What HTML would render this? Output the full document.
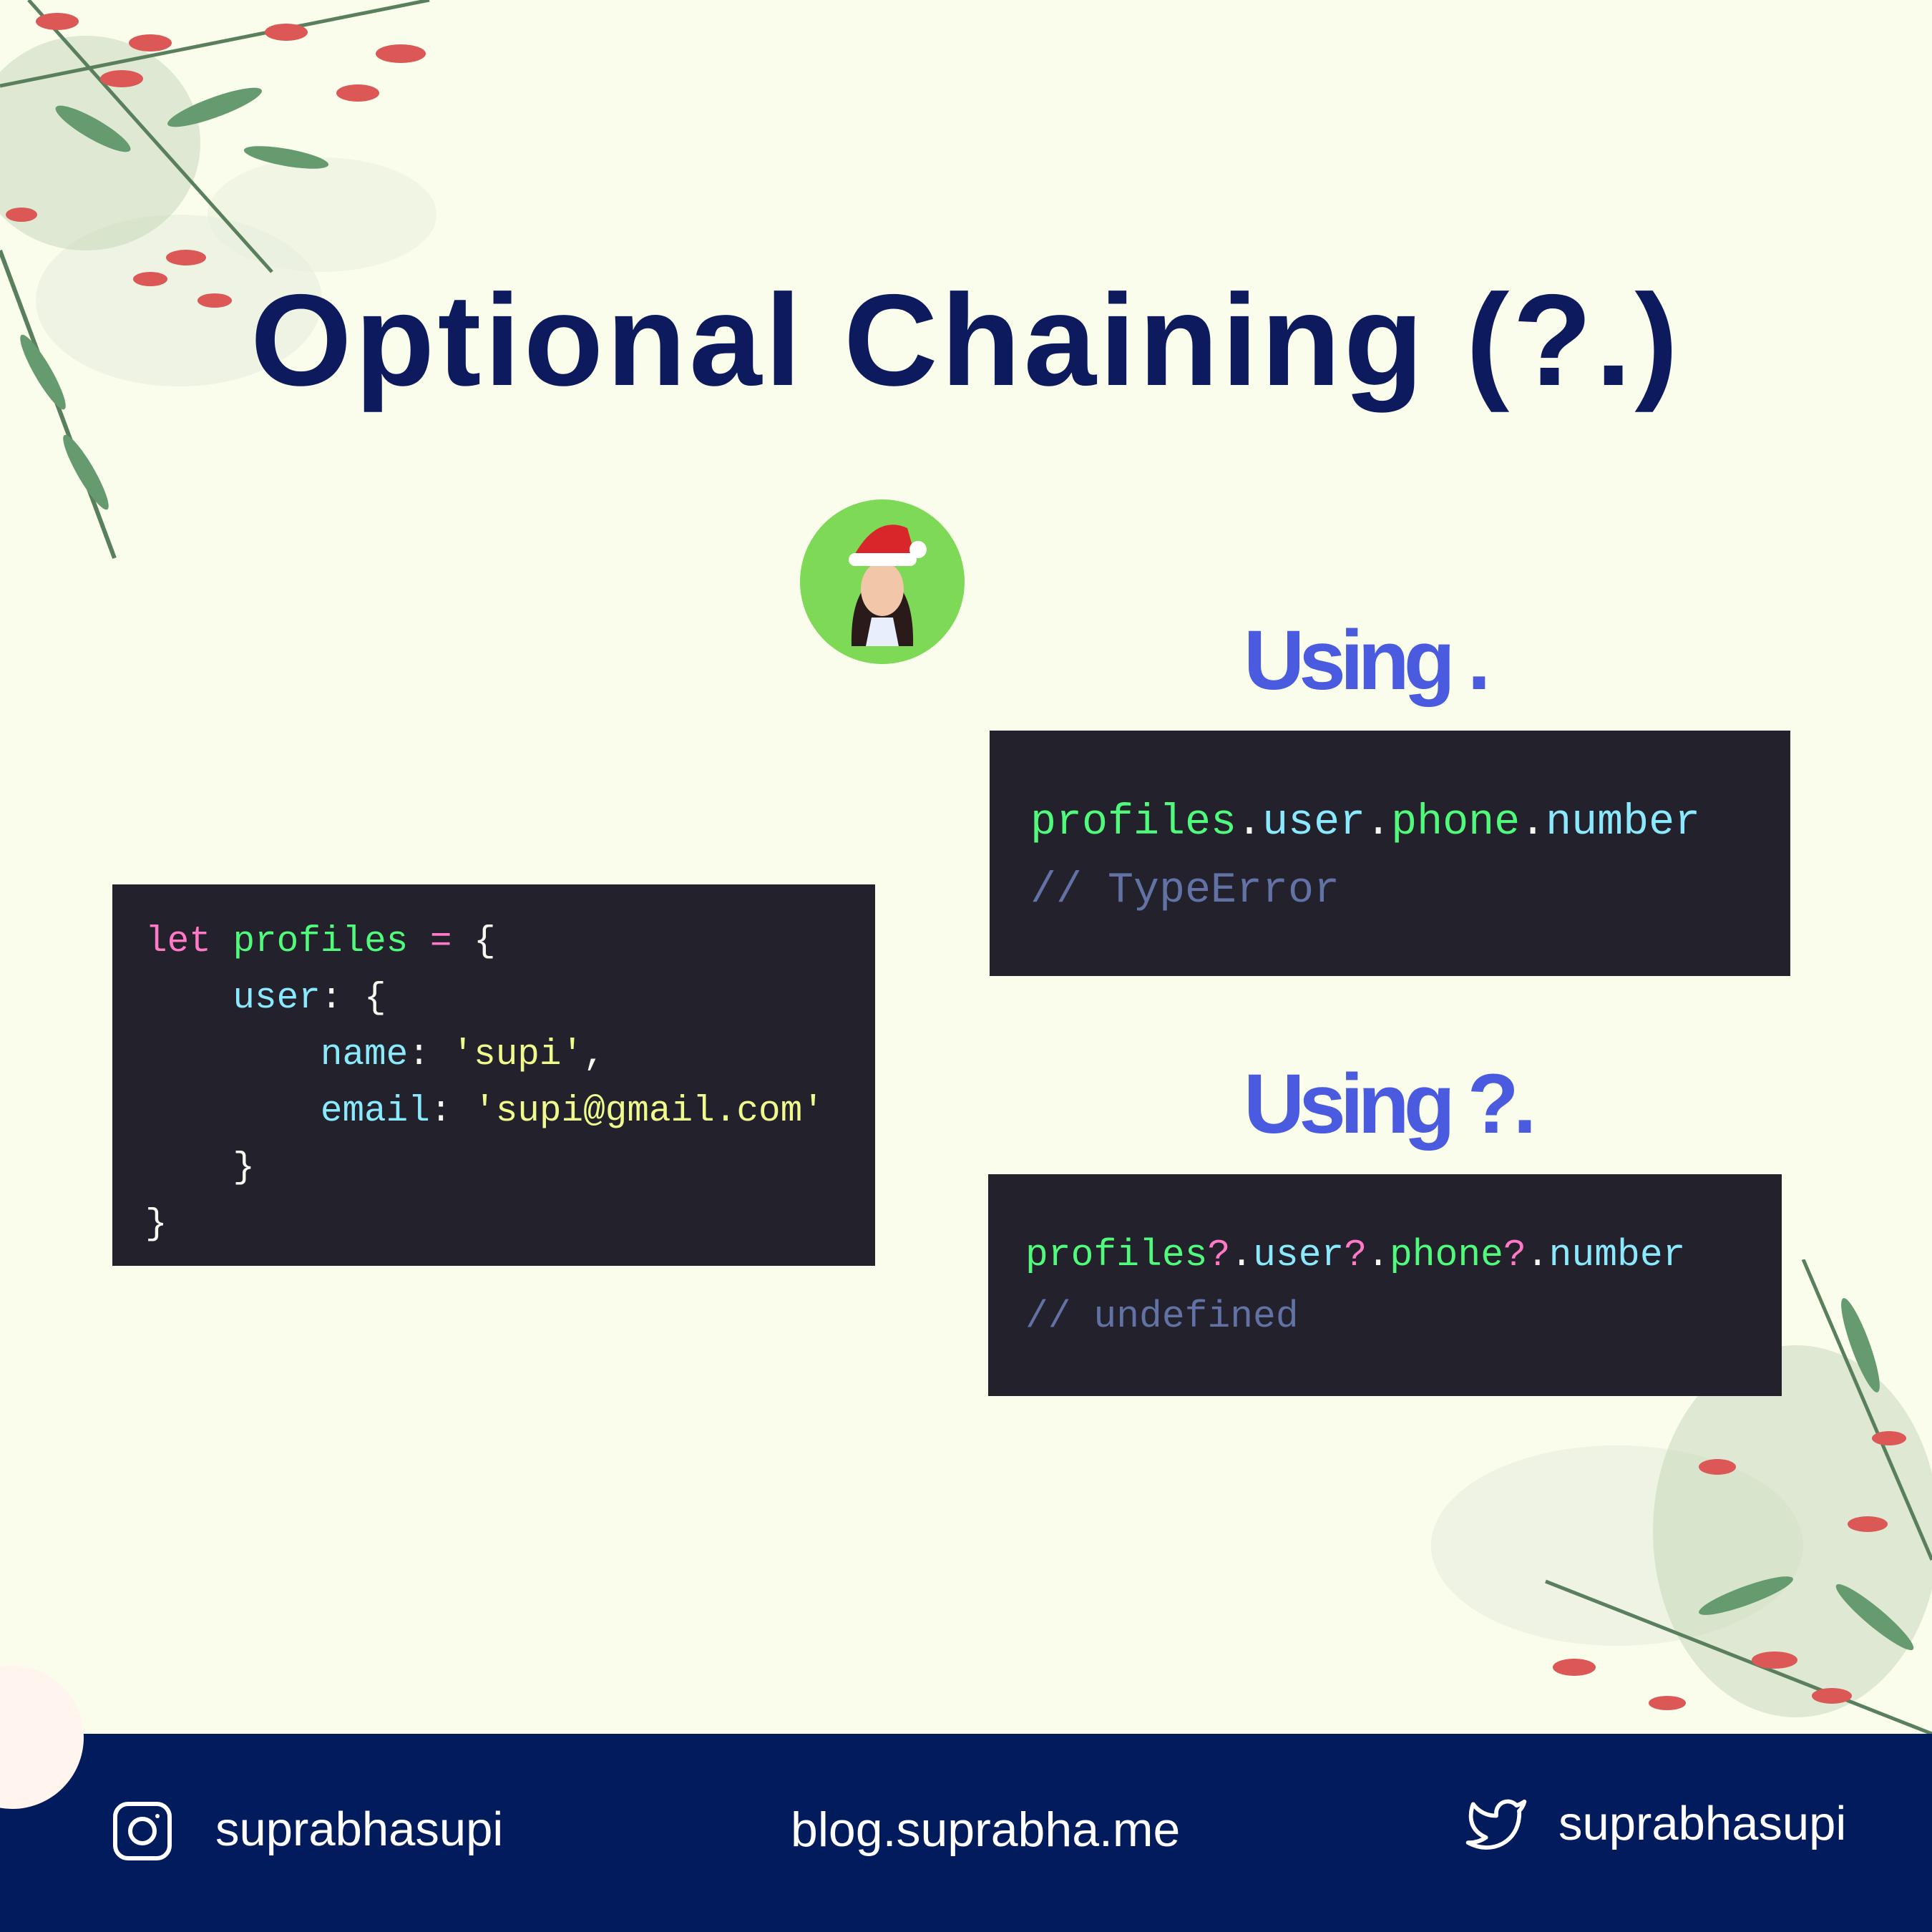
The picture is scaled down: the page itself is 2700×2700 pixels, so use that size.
<!DOCTYPE html>
<html><head><meta charset="utf-8"><style>
html,body{margin:0;padding:0}
body{width:2700px;height:2700px;position:relative;overflow:hidden;background:#fafdec;font-family:"Liberation Sans",sans-serif}
.abs{position:absolute}
.title{left:350px;top:370px;font-size:182px;font-weight:bold;color:#0d1b5e;letter-spacing:4.5px;white-space:nowrap}
.using{font-size:118px;font-weight:bold;color:#4a5be0;white-space:nowrap;letter-spacing:-8px}
.code{background:#22212c;font-family:"Liberation Mono",monospace;white-space:pre;color:#f8f8f2}
.pk{color:#ff79c6}.gr{color:#50fa7b}.cy{color:#8be9fd}.ye{color:#f1fa8c}.cm{color:#6272a4}
.footer{left:0;top:2423px;width:2700px;height:277px;background:#021b5c}
.ft{color:#fff;font-size:67px;white-space:nowrap}
</style></head><body>

<svg class="abs" style="left:0;top:0" width="820" height="820" viewBox="0 0 820 820">
<g opacity="0.85">
<ellipse cx="250" cy="420" rx="200" ry="120" fill="#e3eadb" opacity="0.6"/>
<ellipse cx="450" cy="300" rx="160" ry="80" fill="#e6ecdc" opacity="0.6"/>
<ellipse cx="120" cy="200" rx="160" ry="150" fill="#b9ceb0" opacity="0.5"/>
<path d="M0 350 L160 780" stroke="#3d6a45" stroke-width="6"/>
<path d="M0 120 L600 0" stroke="#3d6a45" stroke-width="5"/>
<path d="M40 0 L380 380" stroke="#3d6a45" stroke-width="5"/>
<g fill="#d63c3c">
<ellipse cx="80" cy="30" rx="30" ry="12"/><ellipse cx="210" cy="60" rx="30" ry="12"/><ellipse cx="400" cy="45" rx="30" ry="12"/>
<ellipse cx="560" cy="75" rx="35" ry="13"/><ellipse cx="500" cy="130" rx="30" ry="12"/><ellipse cx="170" cy="110" rx="30" ry="12"/>
<ellipse cx="260" cy="360" rx="28" ry="11"/><ellipse cx="300" cy="420" rx="24" ry="10"/><ellipse cx="210" cy="390" rx="24" ry="10"/>
<ellipse cx="30" cy="300" rx="22" ry="10"/>
</g>
<g fill="#4c8a5a">
<ellipse cx="130" cy="180" rx="60" ry="14" transform="rotate(30 130 180)"/>
<ellipse cx="300" cy="150" rx="70" ry="14" transform="rotate(-20 300 150)"/>
<ellipse cx="60" cy="520" rx="60" ry="12" transform="rotate(60 60 520)"/>
<ellipse cx="120" cy="660" rx="60" ry="12" transform="rotate(60 120 660)"/>
<ellipse cx="400" cy="220" rx="60" ry="12" transform="rotate(10 400 220)"/>
</g></g></svg>

<svg class="abs" style="left:1960px;top:1760px" width="740" height="663" viewBox="0 0 740 663">
<g opacity="0.85">
<ellipse cx="300" cy="400" rx="260" ry="140" fill="#e3eadb" opacity="0.6"/>
<ellipse cx="550" cy="380" rx="200" ry="260" fill="#b9ceb0" opacity="0.5"/>
<path d="M560 0 L740 420" stroke="#3d6a45" stroke-width="5"/>
<path d="M200 450 L740 663" stroke="#3d6a45" stroke-width="5"/>
<g fill="#d63c3c">
<ellipse cx="440" cy="290" rx="26" ry="11"/><ellipse cx="650" cy="370" rx="28" ry="11"/><ellipse cx="520" cy="560" rx="32" ry="12"/>
<ellipse cx="240" cy="570" rx="30" ry="12"/><ellipse cx="680" cy="250" rx="24" ry="10"/><ellipse cx="600" cy="610" rx="28" ry="11"/>
<ellipse cx="370" cy="620" rx="26" ry="10"/>
</g>
<g fill="#4c8a5a">
<ellipse cx="640" cy="120" rx="70" ry="13" transform="rotate(70 640 120)"/>
<ellipse cx="480" cy="470" rx="70" ry="13" transform="rotate(-20 480 470)"/>
<ellipse cx="660" cy="500" rx="70" ry="13" transform="rotate(40 660 500)"/>
</g></g></svg>

<div class="abs title">Optional Chaining (?.)</div>

<svg class="abs" style="left:1118px;top:698px" width="230" height="230" viewBox="0 0 230 230">
<circle cx="115" cy="115" r="115" fill="#7ed957"/>
<path d="M72 205 Q70 120 115 105 Q160 120 158 205 Z" fill="#2a1a1a"/>
<ellipse cx="115" cy="125" rx="30" ry="38" fill="#f2c6a8"/>
<path d="M92 205 L100 165 L130 165 L138 205 Z" fill="#e8eefb"/>
<path d="M72 85 Q105 20 150 40 L160 75 Z" fill="#d8262b"/>
<rect x="68" y="75" width="95" height="18" rx="9" fill="#fff"/>
<circle cx="165" cy="70" r="12" fill="#fff"/>
</svg>

<div class="abs using" style="left:1738px;top:855px">Using .</div>
<div class="abs code" style="left:1383px;top:1021px;width:1119px;height:343px;font-size:60px;line-height:95px">
<div style="position:absolute;left:57px;top:82px"><span class="gr">profiles</span>.<span class="cy">user</span>.<span class="gr">phone</span>.<span class="cy">number</span>
<span class="cm">// TypeError</span></div></div>

<div class="abs using" style="left:1738px;top:1475px">Using ?.</div>
<div class="abs code" style="left:1381px;top:1641px;width:1109px;height:310px;font-size:53px;line-height:86px">
<div style="position:absolute;left:52px;top:70px"><span class="gr">profiles</span><span class="pk">?</span>.<span class="cy">user</span><span class="pk">?</span>.<span class="gr">phone</span><span class="pk">?</span>.<span class="cy">number</span>
<span class="cm">// undefined</span></div></div>

<div class="abs code" style="left:157px;top:1236px;width:1066px;height:533px;font-size:51px;line-height:79px">
<div style="position:absolute;left:46px;top:41px"><span class="pk">let</span> <span class="gr">profiles</span> <span class="pk">=</span> {
    <span class="cy">user</span>: {
        <span class="cy">name</span>: <span class="ye">'supi'</span>,
        <span class="cy">email</span>: <span class="ye">'supi@gmail.com'</span>
    }
}</div></div>

<div class="abs footer"></div>
<div class="abs" style="left:-83px;top:2328px;width:200px;height:200px;border-radius:50%;background:#fff5ee"></div>

<svg class="abs" style="left:157px;top:2517px" width="84" height="84" viewBox="0 0 84 84" fill="none" stroke="#fff" stroke-width="6">
<rect x="4" y="4" width="76" height="76" rx="18"/><circle cx="42" cy="42" r="17"/><circle cx="63" cy="21" r="3" fill="#fff" stroke="none"/>
</svg>
<div class="abs ft" style="left:301px;top:2518px">suprabhasupi</div>
<div class="abs ft" style="left:1105px;top:2518px;font-size:68px">blog.suprabha.me</div>
<svg class="abs" style="left:2048px;top:2512px" width="86" height="76" viewBox="0 0 24 21" fill="none" stroke="#fff" stroke-width="1.6" stroke-linejoin="round">
<path d="M23 1.5a10.9 10.9 0 0 1-3.1 1.5 4.5 4.5 0 0 0-7.9 3v1A10.7 10.7 0 0 1 3 2.5s-4 9 5 13a11.6 11.6 0 0 1-7 2c9 5 20 0 20-11.5a4.5 4.5 0 0 0-.1-.8A7.7 7.7 0 0 0 23 1.5z"/>
</svg>
<div class="abs ft" style="left:2178px;top:2510px">suprabhasupi</div>
</body></html>
